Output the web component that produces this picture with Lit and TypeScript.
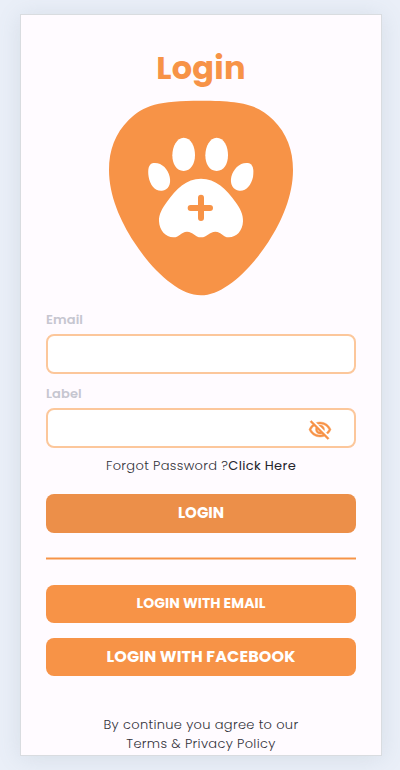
import { LitElement, html, css } from "lit";
import { customElement } from "lit/decorators.js";

@customElement("paw-logo")
class PawLogo extends LitElement {
  static styles = css`
    :host { display: block; width: 200px; height: 215px; }
    svg { display: block; }
    .shield { fill: #f79347; }
    .paw { fill: #fff; }
    .plus { stroke: #f79347; stroke-width: 18; stroke-linecap: round; }
  `;
  render() {
    return html`<svg width="200" height="215" viewBox="0 0 600 645">
      <path class="shield" d="M303 32C430 32 475 45 520 90C560 130 579 180 579 240C579 318 545 394 505 456C449 542 369 616 303 616C237 616 157 542 102 456C61 392 27 317 27 240C27 180 46 130 86 90C131 45 176 32 303 32Z"/>
      <g class="paw">
        <path d="M251 143C273 143 285 169 285 196C285 222 272 243 251 243C229 243 217 222 217 196C217 169 231 143 251 143Z"/>
        <path d="M350 143C372 143 384 169 384 196C384 222 372 243 350 243C328 243 316 222 316 196C316 169 330 143 350 143Z"/>
        <path d="M160 219C184 216 204 236 209 260C214 283 205 299 186 302C165 304 150 285 146 261C143 239 145 222 160 219Z"/>
        <path d="M444 219C420 216 400 236 394 260C389 283 399 299 418 302C438 304 454 285 459 261C462 239 460 222 444 219Z"/>
        <path d="M303 266C347 266 379 297 407 337C420 355 430 373 429 394C428 423 409 442 387 442C367 442 365 425 346 425C328 425 322 442 303 442C284 442 280 425 261 425C243 425 240 442 220 442C197 442 178 421 177 394C176 373 187 355 200 337C228 297 259 266 303 266Z"/>
      </g>
      <path class="plus" d="M303 323V384M272 354H330"/>
    </svg>`;
  }
}

@customElement("app-root")
class AppRoot extends LitElement {
  static styles = css`
    :host {
      display: block; box-sizing: border-box; height: 770px; padding: 14px 18px 14px 20px;
      background: #eaeff8; overflow: hidden;
      font-family: Poppins, Inter, sans-serif; color: #32323a;
    }
    .card {
      box-sizing: border-box; width: 362px; height: 742px; padding: 31px 25px 0;
      border: 1px solid #d9dce0; background: #fffbff; overflow: hidden;
      box-shadow: 0 2px 22px rgba(105, 130, 145, .16);
      display: flex; flex-direction: column;
    }
    h1 {
      margin: 0 0 1px; height: 43px; line-height: 43px; text-align: center;
      font-size: 32px; font-weight: 700; letter-spacing: .2px; color: #f79347;
    }
    paw-logo { margin-left: 54px; flex: none; }
    label {
      display: block; height: 20px; line-height: 20px; margin-top: 4.5px;
      font-size: 13px; font-weight: 600; letter-spacing: .1px; color: #c6c6d0;
    }
    .field {
      box-sizing: border-box; flex: none; height: 40px; border: 2px solid #fcc79b; border-radius: 8px;
      background: #fff; display: flex; align-items: center; justify-content: flex-end;
      padding: 3px 22px 0 12px;
    }
    .field input { flex: 1; min-width: 0; border: 0; outline: 0; background: none; font: inherit; }
    .eye { flex: none; fill: #f79347; stroke: #f79347; stroke-width: .4; display: block; }
    .first { margin: 4.5px 0 5px; }
    .second { margin-top: 4.5px; }
    .note { text-align: center; font-size: 13px; line-height: 19px; white-space: nowrap; font-weight: 300; }
    .forgot { margin: 8px 0 19px; letter-spacing: .33px; }
    .forgot a { font-weight: 400; color: #25252c; }
    button {
      flex: none; height: 38.5px; padding: 0; border: 0; border-radius: 8px; background: #f79347; color: #fff;
      font: 700 14px/38px Poppins, Inter, sans-serif; text-align: center;
    }
    .login { background: #ec8f49; font-size: 15px; line-height: 37px; padding-bottom: 1px; }
    .rule {
      box-sizing: border-box; flex: none; height: 3px; margin: 24.5px 0 24.5px; background: #f79347;
      border: solid #fac9a4; border-width: 1px 0;
    }
    .email { font-size: 14px; letter-spacing: .07px; line-height: 36px; padding-bottom: 2px; }
    .facebook { margin: 14.5px 0 39px; font-size: 16px; letter-spacing: .1px; }
    .terms { letter-spacing: .33px; }
  `;
  render() {
    return html`<main class="card">
      <h1>Login</h1>
      <paw-logo></paw-logo>
      <label for="email">Email</label>
      <div class="field first"><input id="email" type="email"></div>
      <label for="password">Label</label>
      <div class="field second">
        <input id="password" type="password">
        <svg class="eye" width="24" height="24" viewBox="0 0 24 24"><path d="M12 6c3.79 0 7.17 2.13 8.82 5.5-.59 1.22-1.42 2.27-2.41 3.12l1.41 1.41c1.39-1.23 2.49-2.77 3.18-4.53C21.27 7.11 17 4 12 4c-1.27 0-2.49.2-3.64.57l1.65 1.65C10.66 6.09 11.32 6 12 6zm-1.07 1.14L13 9.21c.57.25 1.03.71 1.28 1.28l2.07 2.07c.08-.34.14-.7.14-1.07C16.5 9.01 14.48 7 12 7c-.37 0-.72.05-1.07.14zM2.01 3.87l2.68 2.68C3.06 7.83 1.77 9.53 1 11.5 2.73 15.89 7 19 12 19c1.52 0 2.98-.29 4.32-.82l3.42 3.42 1.41-1.41L3.42 2.45 2.01 3.87zm7.5 7.5l2.61 2.61c-.04.01-.08.02-.12.02-1.38 0-2.5-1.12-2.5-2.5 0-.05.01-.08.01-.13zm-3.4-3.4l1.75 1.75c-.23.55-.36 1.15-.36 1.78 0 2.48 2.02 4.5 4.5 4.5.63 0 1.23-.13 1.77-.36l.98.98c-.88.24-1.8.38-2.75.38-3.79 0-7.17-2.13-8.82-5.5.7-1.43 1.72-2.61 2.93-3.53z"/></svg>
      </div>
      <div class="note forgot">Forgot Password ?<a>Click Here</a></div>
      <button class="login">LOGIN</button>
      <div class="rule"></div>
      <button class="email">LOGIN WITH EMAIL</button>
      <button class="facebook">LOGIN WITH FACEBOOK</button>
      <div class="note terms">By continue you agree to our<br>Terms &amp; Privacy Policy</div>
    </main>`;
  }
}
